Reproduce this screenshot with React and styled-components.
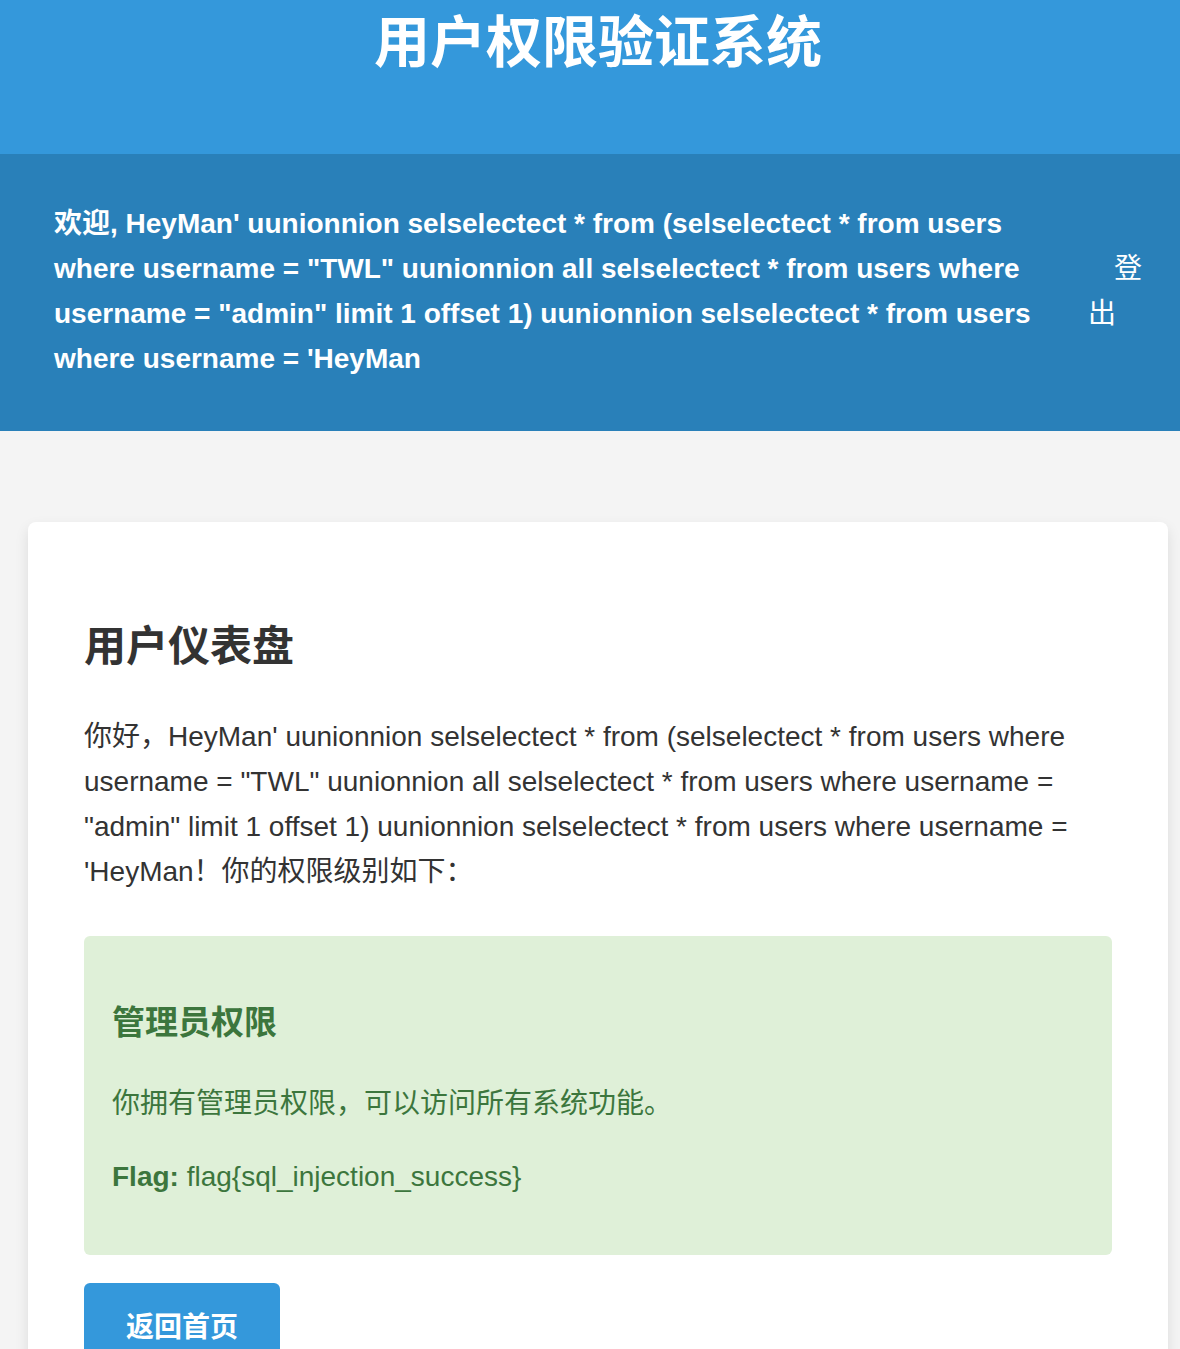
import React from "react";
import styled, { createGlobalStyle } from "styled-components";

const GlobalStyle = createGlobalStyle`
  *, *::before, *::after { box-sizing: border-box; }
  body {
    margin: 0;
    background: #f4f4f4;
    color: #333;
    font-family: "Liberation Sans", Arial, "Noto Sans CJK SC", sans-serif;
    font-size: 28px;
    line-height: 45px;
  }
`;

const Header = styled.header`
  padding: 0 12px 68px 28px;
  background: #3498db;
  color: #fff;
  text-align: center;
`;

const SiteTitle = styled.h1`
  margin: 0;
  font-size: 56px;
  line-height: 86px;
`;

const Nav = styled.nav`
  display: flex;
  justify-content: space-between;
  align-items: center;
  padding: 47px 38px 50px 54px;
  background: #2980b9;
  color: #fff;
`;

const Welcome = styled.strong`
  flex: 0 1 980px;
`;

const NavLinks = styled.div`
  width: 54px;
`;

const NavLink = styled.a`
  margin-left: 26px;
  color: #fff;
  text-decoration: none;
`;

const Card = styled.main`
  margin: 91px 12px 0 28px;
  padding: 91px 56px 84px;
  background: #fff;
  border-radius: 8px;
  box-shadow: 0 6px 14px rgba(0, 0, 0, 0.1);
`;

const CardTitle = styled.h2`
  margin: 0 0 34px;
  font-size: 42px;
  line-height: 67px;
`;

const Text = styled.p`
  margin: 0 0 28px;
`;

const Permission = styled.section`
  margin: 42px 0 28px;
  padding: 60px 28px 28px;
  background: #dff0d8;
  color: #3c763d;
  border-radius: 6px;
`;

const PermissionTitle = styled.h3`
  margin: 0 0 32px;
  font-size: 33px;
  line-height: 53px;
`;

const HomeButton = styled.button`
  display: block;
  padding: 22px 42px;
  border: 0;
  border-radius: 6px;
  background: #3498db;
  color: #fff;
  font: inherit;
  font-weight: bold;
`;

const payload = `HeyMan' uunionnion selselectect * from (selselectect * from users where username = "TWL" uunionnion all selselectect * from users where username = "admin" limit 1 offset 1) uunionnion selselectect * from users where username = 'HeyMan`;

export default function App() {
  return (
    <>
      <GlobalStyle />
      <Header>
        <SiteTitle>用户权限验证系统</SiteTitle>
      </Header>
      <Nav>
        <Welcome>{`欢迎, ${payload}`}</Welcome>
        <NavLinks>
          <NavLink href="#logout">登出</NavLink>
        </NavLinks>
      </Nav>
      <Card>
        <CardTitle>用户仪表盘</CardTitle>
        <Text>{`你好，${payload}！你的权限级别如下：`}</Text>
        <Permission>
          <PermissionTitle>管理员权限</PermissionTitle>
          <Text>你拥有管理员权限，可以访问所有系统功能。</Text>
          <Text>
            <strong>Flag:</strong> flag&#123;sql_injection_success&#125;
          </Text>
        </Permission>
        <HomeButton type="button">返回首页</HomeButton>
      </Card>
    </>
  );
}
